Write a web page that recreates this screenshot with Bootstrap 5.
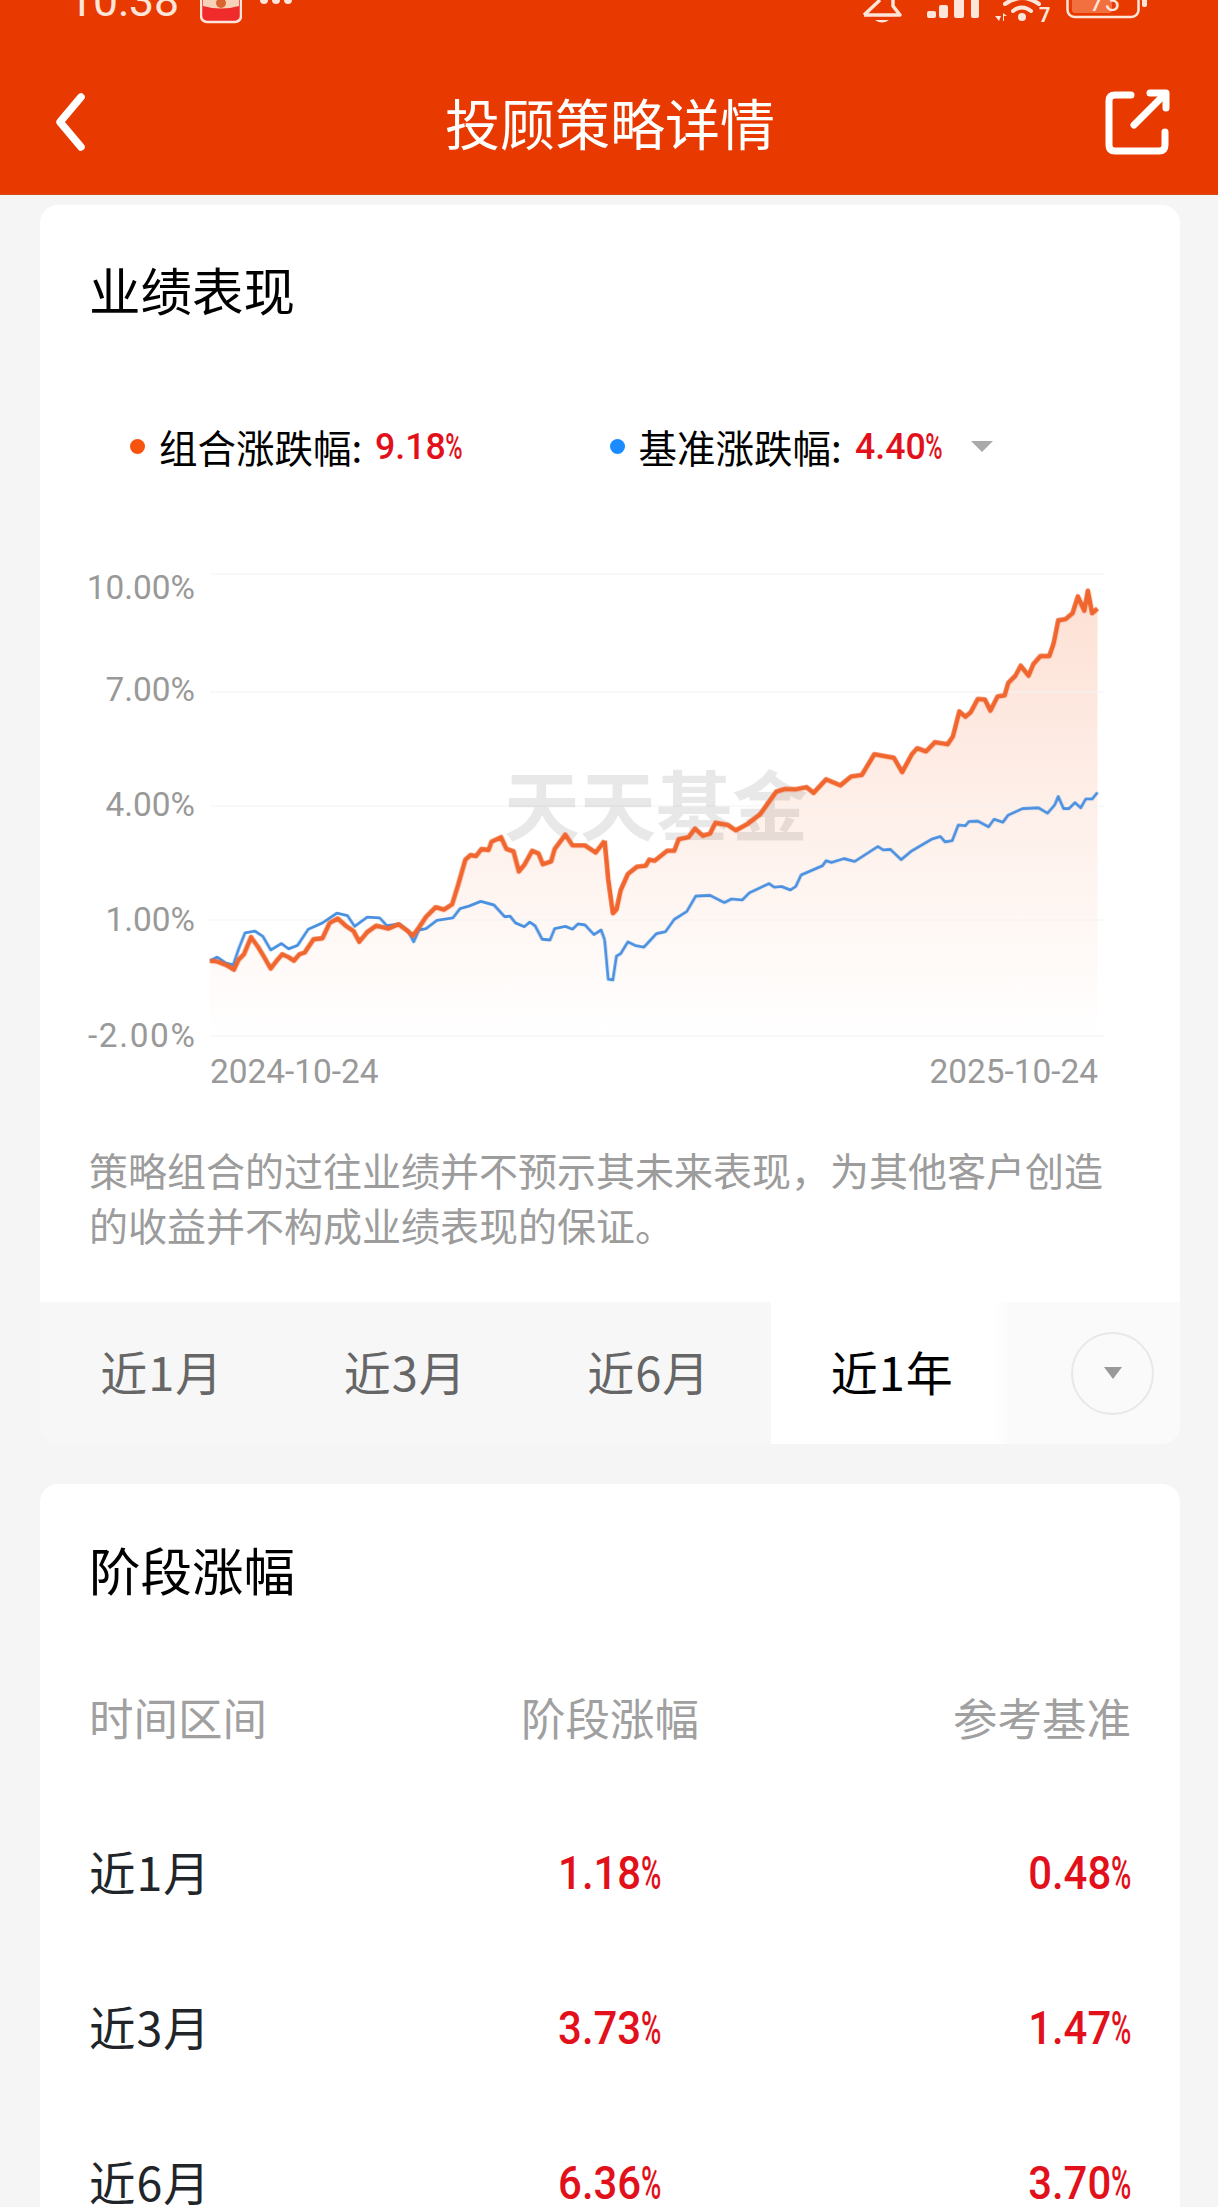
<!DOCTYPE html>
<html lang="zh-CN">

<head>
    <meta charset="UTF-8">
    <meta name="viewport" content="width=device-width, initial-scale=1.0">
    <title>投顾策略详情</title>
    <link href="https://cdn.jsdelivr.net/npm/bootstrap@5.3.2/dist/css/bootstrap.min.css" rel="stylesheet">
    <style>
        html, body { height: 2207px; overflow: hidden; }
        body { background: #f5f5f5; font-family: "Noto Sans CJK SC", "Liberation Sans", sans-serif; color: #000; }
        .app-head { background: #e83a00; height: 195px; border-bottom: 1px solid #d04a1c; color: #fff; }
        .status-row { height: 24px; overflow: hidden; padding: 0 71px 0 68px; color: #fde5da; }
        .status-time { font: 400 44.6px/1 Roboto, sans-serif; margin-right: 21px; }
        .status-row svg { display: block; flex: none; }
        .head-bar { height: 106px; margin-top: 45px; padding: 0 48px 0 50px; }
        .head-title { font-size: 55px; line-height: 1; margin-top: -2px; }
        .head-side { width: 120px; }
        .info-card { background: #fff; border-radius: 18px; margin: 0 38px 0 40px; overflow: hidden; }
        .card-one { margin-top: 10px; height: 1239px; padding-top: 59px; }
        .card-two { margin-top: 40px; padding: 60px 49px 0; }
        .card-title-txt { font-size: 51.5px; line-height: 50px; font-weight: 400; margin: 0; }
        .pad-side { padding-left: 49px; padding-right: 49px; }
        .legend-row { height: 50px; margin-top: 107px; font-size: 38.5px; line-height: 50px; padding-left: 90px; }
        .legend-group { width: 479.5px; }
        .legend-dot { width: 15px; height: 15px; border-radius: 50%; margin-right: 14px; }
        .dot-orange { background: #f5530e; }
        .dot-blue { background: #1a8cff; }
        .num-red { color: #e2101a; font-family: Roboto, "Liberation Sans", sans-serif; font-weight: 500; display: inline-block; }
        .legend-row .num-red { font-size: 37.5px; transform: scaleX(.95); transform-origin: left center; margin-left: 13px; }
        .pct-mark { display: inline-block; width: .48em; transform: scaleX(.66); transform-origin: left center; }
        .tri-down { width: 0; height: 0; border-left: 11px solid transparent; border-right: 11px solid transparent; border-top: 11px solid #aaa; }
        .legend-end { margin-left: 24px; }
        .chart-box { display: block; margin-top: 89px; width: 1140px; height: 535px; }
        .note-txt { margin: 47px 0 0; font-size: 39px; line-height: 55px; color: #9c9c9c; }
        .range-strip { margin-top: 50px; height: 142px; background: #f7f7f7; }
        .range-tab { flex: 0 0 243.5px; font-size: 47px; letter-spacing: 1px; color: #666; padding-bottom: 4px; }
        .range-tab.is-on { color: #000; background: linear-gradient(90deg, #fff 92%, #f9f9f9); }
        .range-more { background: #fafafa; padding-right: 26px; }
        .more-circle { width: 83px; height: 83px; border: 2px solid #e8e8e8; border-radius: 50%; }
        .more-circle .tri-down { border-left-width: 9px; border-right-width: 9px; border-top-width: 12px; border-top-color: #999; }
        .stage-table { table-layout: fixed; margin: 47px 0 0; --bs-table-bg: transparent; }
        .stage-table th, .stage-table td { padding: 0; vertical-align: middle; font-size: 44.5px; }
        .stage-table th { height: 152px; color: #a0a0a0; font-weight: 400; }
        .stage-table td { height: 155px; font-size: 46.5px; letter-spacing: 1px; }
        .stage-table .num-red { font-size: 46px; letter-spacing: 0; transform: scaleX(.91); margin-top: 4px; }
        .stage-table .text-end .num-red { transform-origin: right center; }
    </style>
</head>

<body>
    <header class="app-head">
        <div class="status-row d-flex align-items-end">
            <span class="status-time">10:38</span>
            <svg width="42" height="24" viewBox="0 0 42 24">
                <rect x="1" y="-8" width="40" height="30" rx="6" fill="#ef2b2b" stroke="#fde5da" stroke-width="2.5" />
                <path d="M3 -4H39V6Q21 11 3 6Z" fill="#f7d2b8" />
                <circle cx="21" cy="3" r="5" fill="#d9662f" />
            </svg>
            <svg class="ms-3" width="36" height="24" viewBox="0 0 36 24">
                <circle cx="6" cy="0" r="4" fill="#fde5da" />
                <circle cx="18" cy="0" r="4" fill="#fde5da" />
                <circle cx="30" cy="0" r="4" fill="#fde5da" />
            </svg>
            <div class="ms-auto d-flex align-items-end">
                <svg width="42" height="24" viewBox="0 0 42 24" fill="none" stroke="#fde5da" stroke-width="3.5" stroke-linejoin="round">
                    <path d="M3 15H39L32 6V0" />
                    <path d="M19 0L3 15" />
                    <path d="M14 20H28Q21 25 14 20Z" fill="#fde5da" stroke="none" />
                </svg>
                <svg class="ms-4" width="52" height="24" viewBox="0 0 52 24" fill="#fde5da">
                    <rect x="0" y="11" width="9" height="7" rx="2" />
                    <rect x="12" y="5" width="9" height="13" rx="2" />
                    <rect x="27" y="-4" width="10" height="22" rx="2" />
                    <rect x="44" y="-4" width="8" height="22" rx="2" />
                </svg>
                <svg class="ms-3" width="55" height="24" viewBox="0 0 55 24">
                    <g fill="none" stroke="#fde5da" stroke-width="4" stroke-linecap="round">
                        <path d="M18 11Q27 4 36 11" />
                        <path d="M10 4Q27 -8 44 4" />
                    </g>
                    <circle cx="27" cy="17" r="4" fill="#fde5da" />
                    <path d="M0 16H6L4 21ZM8 13L12 16H9V21H8Z" fill="#fde5da" />
                    <text x="44" y="22" font-family="Roboto, sans-serif" font-size="20" font-weight="700" fill="#fde5da">7</text>
                </svg>
                <svg class="ms-3" width="81" height="24" viewBox="0 0 81 24">
                    <rect x="1.5" y="-10" width="71" height="27" rx="7" fill="none" stroke="#fde5da" stroke-width="2.5" />
                    <rect x="6" y="-6" width="40" height="19" rx="3" fill="#f2703f" />
                    <text x="23" y="11" font-family="Roboto, sans-serif" font-size="28" fill="#fde5da">73</text>
                    <rect x="76" y="-4" width="5" height="11" rx="2" fill="#fde5da" />
                </svg>
            </div>
        </div>
        <div class="head-bar d-flex align-items-center justify-content-between">
            <div class="head-side">
                <svg class="d-block" width="40" height="60" viewBox="0 0 40 60" fill="none" stroke="#fff" stroke-width="7.5" stroke-linecap="round" stroke-linejoin="round">
                    <path d="M31 5L10 30L31 55" />
                </svg>
            </div>
            <div class="head-title">投顾策略详情</div>
            <div class="head-side d-flex justify-content-end">
                <svg class="d-block" width="68" height="68" viewBox="0 0 68 68" fill="none" stroke="#fff" stroke-width="7" stroke-linecap="round" stroke-linejoin="round">
                    <path d="M29 7H13Q7 7 7 13V57Q7 63 13 63H57Q63 63 63 57V44" />
                    <path d="M32 37L63 6" />
                    <path d="M48 5H64V20" />
                </svg>
            </div>
        </div>
    </header>

    <section class="info-card card-one">
        <h2 class="card-title-txt pad-side">业绩表现</h2>
        <div class="legend-row d-flex align-items-center">
            <div class="legend-group d-flex align-items-center">
                <span class="legend-dot dot-orange"></span>
                <span>组合涨跌幅:</span>
                <span class="num-red">9.18<span class="pct-mark">%</span></span>
            </div>
            <span class="legend-dot dot-blue"></span>
            <span>基准涨跌幅:</span>
            <span class="num-red">4.40<span class="pct-mark">%</span></span>
            <span class="tri-down legend-end"></span>
        </div>

        <svg class="chart-box" viewBox="40 560 1140 535">
            <defs>
                <linearGradient id="areaFade" gradientUnits="userSpaceOnUse" x1="0" y1="140" x2="0" y2="1390">
                    <stop offset="0" stop-color="#fde0d4" />
                    <stop offset="1" stop-color="#ffffff" />
                </linearGradient>
                <filter id="roughLine" x="-2%" y="-5%" width="104%" height="110%">
                    <feTurbulence type="fractalNoise" baseFrequency=".35" numOctaves="1" seed="4" />
                    <feDisplacementMap in="SourceGraphic" scale="3.5" xChannelSelector="R" yChannelSelector="G" />
                </filter>
            </defs>

            <!-- points are in 2.8x crop units, second half shifted by 1400 -->
            <g transform="translate(60 540) scale(.35714)">
                <polygon fill="url(#areaFade)" points="420,1390 420,1178 440,1180 465,1190 487,1203 500,1175 515,1160 535,1112 555,1140 570,1165 590,1200 605,1180 622,1160 640,1168 655,1178 670,1160 685,1155 710,1118 735,1115 755,1072 778,1060 800,1080 822,1095 838,1125 860,1098 885,1080 920,1088 948,1076 970,1092 988,1108 1005,1085 1025,1055 1052,1028 1075,1035 1098,1020 1115,965 1135,895 1150,882 1165,885 1180,865 1200,868 1208,845 1235,832 1250,865 1270,872 1285,928 1300,910 1322,870 1340,878 1352,908 1375,900 1385,865 1415,825 1435,855 1470,855 1500,875 1525,842 1525,1390" />
                <polygon transform="translate(1400 0)" fill="url(#areaFade)" points="125,1390 125,842 135,950 148,1045 158,1035 170,980 190,935 215,915 240,912 250,895 265,898 300,870 320,870 332,838 360,832 378,808 400,828 420,822 435,792 470,798 492,813 525,795 560,768 605,705 630,697 660,698 690,692 710,708 745,670 785,687 815,662 845,658 880,600 935,610 958,650 985,600 1000,583 1025,592 1050,566 1085,572 1100,550 1118,480 1135,495 1150,482 1170,445 1190,447 1205,478 1225,438 1245,435 1255,400 1275,380 1290,352 1312,380 1325,348 1345,325 1370,325 1382,290 1395,225 1415,222 1435,205 1450,158 1468,198 1478,142 1490,205 1505,192 1505,1390" />
            </g>
            <path d="M210 574H1105M210 692H1105M210 806H1105M210 920H1105M210 1036H1105" stroke="#f4f4f4" stroke-opacity=".7" stroke-width="1.5" />
            <g font-family="Roboto, sans-serif" font-size="33.4" fill="#999" text-anchor="end">
                <text x="195" y="599">10.00%</text>
                <text x="195" y="701">7.00%</text>
                <text x="195" y="816">4.00%</text>
                <text x="195" y="931">1.00%</text>
                <text x="195" y="1047" textLength="107">-2.00%</text>
                <text x="1098" y="1083">2025-10-24</text>
            </g>
            <text x="210" y="1083" font-family="Roboto, sans-serif" font-size="33.4" fill="#999">2024-10-24</text>
            <text x="504" y="835" font-family="'Noto Sans CJK SC', sans-serif" font-size="76" font-weight="700" fill="#000" fill-opacity=".09">天天基金</text>

            <g transform="translate(60 540) scale(.35714)" filter="url(#roughLine)">
                <polyline fill="none" stroke="#4a90e0" stroke-width="8" stroke-linejoin="round" points="420,1178 440,1168 465,1185 485,1190 500,1145 518,1100 545,1095 568,1110 590,1148 620,1130 640,1145 665,1135 695,1090 735,1072 775,1045 805,1052 825,1082 860,1056 895,1058 915,1080 950,1075 975,1095 990,1125 1005,1092 1025,1088 1055,1065 1100,1058 1120,1032 1145,1025 1178,1012 1215,1022 1245,1055 1260,1053 1275,1072 1300,1083 1315,1070 1330,1080 1350,1118 1372,1120 1385,1088 1415,1082 1435,1090 1450,1075 1470,1078 1495,1105 1515,1092 1525,1120" />
                <polyline fill="none" stroke="#4a90e0" stroke-width="8" stroke-linejoin="round" transform="translate(1400 0)" points="125,1120 135,1230 148,1232 158,1165 170,1158 190,1125 210,1135 235,1140 270,1102 295,1097 320,1062 355,1040 380,997 420,995 460,1015 480,1005 510,1008 530,988 585,962 600,972 620,970 645,980 660,970 675,938 735,912 745,898 760,903 795,892 825,900 890,858 905,868 925,866 955,895 985,870 1040,838 1065,830 1078,845 1098,842 1115,798 1135,800 1145,788 1170,787 1200,803 1215,782 1240,790 1255,770 1295,752 1340,750 1365,765 1385,742 1395,718 1410,752 1425,752 1442,735 1458,750 1472,725 1490,725 1505,707" />
                <polyline fill="none" stroke="#f0662f" stroke-width="13" stroke-linejoin="round" points="420,1178 440,1180 465,1190 487,1203 500,1175 515,1160 535,1112 555,1140 570,1165 590,1200 605,1180 622,1160 640,1168 655,1178 670,1160 685,1155 710,1118 735,1115 755,1072 778,1060 800,1080 822,1095 838,1125 860,1098 885,1080 920,1088 948,1076 970,1092 988,1108 1005,1085 1025,1055 1052,1028 1075,1035 1098,1020 1115,965 1135,895 1150,882 1165,885 1180,865 1200,868 1208,845 1235,832 1250,865 1270,872 1285,928 1300,910 1322,870 1340,878 1352,908 1375,900 1385,865 1415,825 1435,855 1470,855 1500,875 1525,842" />
                <polyline fill="none" stroke="#f0662f" stroke-width="13" stroke-linejoin="round" transform="translate(1400 0)" points="125,842 135,950 148,1045 158,1035 170,980 190,935 215,915 240,912 250,895 265,898 300,870 320,870 332,838 360,832 378,808 400,828 420,822 435,792 470,798 492,813 525,795 560,768 605,705 630,697 660,698 690,692 710,708 745,670 785,687 815,662 845,658 880,600 935,610 958,650 985,600 1000,583 1025,592 1050,566 1085,572 1100,550 1118,480 1135,495 1150,482 1170,445 1190,447 1205,478 1225,438 1245,435 1255,400 1275,380 1290,352 1312,380 1325,348 1345,325 1370,325 1382,290 1395,225 1415,222 1435,205 1450,158 1468,198 1478,142 1490,205 1505,192" />
            </g>
        </svg>

        <p class="note-txt pad-side">策略组合的过往业绩并不预示其未来表现，为其他客户创造的收益并不构成业绩表现的保证。</p>

        <div class="range-strip d-flex">
            <div class="range-tab d-flex align-items-center justify-content-center">近1月</div>
            <div class="range-tab d-flex align-items-center justify-content-center">近3月</div>
            <div class="range-tab d-flex align-items-center justify-content-center">近6月</div>
            <div class="range-tab is-on d-flex align-items-center justify-content-center">近1年</div>
            <div class="range-more flex-fill d-flex align-items-center justify-content-end">
                <div class="more-circle d-flex align-items-center justify-content-center"><span class="tri-down"></span></div>
            </div>
        </div>
    </section>

    <section class="info-card card-two">
        <h2 class="card-title-txt">阶段涨幅</h2>
        <table class="table table-borderless stage-table">
            <thead>
                <tr>
                    <th>时间区间</th>
                    <th class="text-center">阶段涨幅</th>
                    <th class="text-end">参考基准</th>
                </tr>
            </thead>
            <tbody>
                <tr>
                    <td>近1月</td>
                    <td class="text-center"><span class="num-red">1.18<span class="pct-mark">%</span></span></td>
                    <td class="text-end"><span class="num-red">0.48<span class="pct-mark">%</span></span></td>
                </tr>
                <tr>
                    <td>近3月</td>
                    <td class="text-center"><span class="num-red">3.73<span class="pct-mark">%</span></span></td>
                    <td class="text-end"><span class="num-red">1.47<span class="pct-mark">%</span></span></td>
                </tr>
                <tr>
                    <td>近6月</td>
                    <td class="text-center"><span class="num-red">6.36<span class="pct-mark">%</span></span></td>
                    <td class="text-end"><span class="num-red">3.70<span class="pct-mark">%</span></span></td>
                </tr>
            </tbody>
        </table>
    </section>

    <script src="https://cdn.jsdelivr.net/npm/bootstrap@5.3.2/dist/js/bootstrap.bundle.min.js"></script>
</body>

</html>
